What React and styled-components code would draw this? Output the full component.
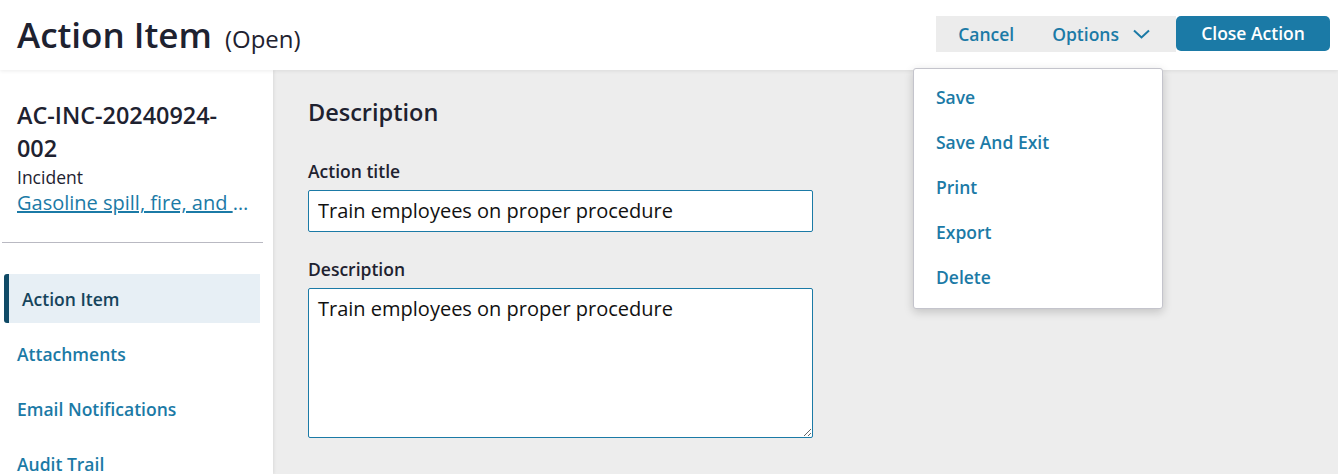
import React from "react";
import styled, { createGlobalStyle } from "styled-components";

const GlobalStyle = createGlobalStyle`
  html, body {
    margin: 0;
    padding: 0;
    height: 100%;
    overflow: hidden;
    font-family: "Open Sans", "Noto Sans", sans-serif;
    background: #ededed;
  }
  * { box-sizing: border-box; }
`;

const BLUE = "#1b7aa6";

const Page = styled.div`
  height: 100vh;
  display: flex;
  flex-direction: column;
`;

const Header = styled.header`
  height: 70px;
  flex: none;
  background: #fff;
  display: flex;
  align-items: center;
  justify-content: space-between;
  padding: 0 8px 0 17px;
  position: relative;
  z-index: 2;
  box-shadow: 0 1px 4px rgba(0, 0, 0, 0.08);
`;

const TitleRow = styled.div`
  display: flex;
  align-items: baseline;
  gap: 13px;
  margin-top: -2px;
`;

const Title = styled.h1`
  margin: 0;
  font-size: 35px;
  font-weight: 600;
  color: #1e2230;
`;

const Status = styled.span`
  font-size: 24px;
  color: #1e2230;
`;

const Actions = styled.div`
  display: flex;
  align-items: stretch;
  height: 36px;
  margin-top: -3px;
  position: relative;
`;

const Toolbar = styled.div`
  display: flex;
  align-items: center;
  gap: 38px;
  background: #ececec;
  padding: 0 26px 0 22px;
`;

const TextButton = styled.button`
  border: none;
  background: none;
  padding: 0;
  font: inherit;
  font-size: 17.5px;
  font-weight: 600;
  color: ${BLUE};
  display: flex;
  align-items: center;
  gap: 14px;
  cursor: pointer;
`;

const PrimaryButton = styled.button`
  border: none;
  background: ${BLUE};
  color: #fff;
  font: inherit;
  font-size: 17.5px;
  font-weight: 600;
  padding: 0;
  border-radius: 5px;
  width: 154px;
  height: 35px;
  cursor: pointer;
`;

const Menu = styled.div`
  position: absolute;
  top: 52px;
  right: 167px;
  width: 250px;
  background: #fff;
  border: 1px solid #c4c4cc;
  border-radius: 3px;
  box-shadow: 0 3px 10px rgba(0, 0, 0, 0.18);
  padding: 6px 0 8px;
  display: flex;
  flex-direction: column;
`;

const MenuItem = styled.div`
  height: 45px;
  display: flex;
  align-items: center;
  padding-left: 22px;
  font-size: 17.5px;
  font-weight: 600;
  color: ${BLUE};
`;

const Body = styled.div`
  flex: 1;
  display: flex;
  min-height: 0;
`;

const Sidebar = styled.aside`
  width: 273px;
  flex: none;
  background: #fff;
  box-shadow: 1px 0 3px rgba(0, 0, 0, 0.08);
  padding-top: 29px;
  z-index: 1;
`;

const Record = styled.div`
  margin: 0 10px 31px 2px;
  padding: 0 12px 25px 15px;
  border-bottom: 1px solid #b9b9c2;
`;

const RecordId = styled.div`
  font-size: 23.4px;
  font-weight: 600;
  line-height: 33px;
  color: #1e2230;
  padding-right: 4px;
`;

const RecordType = styled.div`
  font-size: 17.5px;
  color: #1e2230;
  line-height: 24px;
`;

const RecordLink = styled.a`
  display: block;
  font-size: 20px;
  line-height: 28px;
  color: ${BLUE};
  text-decoration: underline;
  white-space: nowrap;
  overflow: hidden;
  text-overflow: ellipsis;
`;

const Nav = styled.nav`
  display: flex;
  flex-direction: column;
  padding: 0 13px 0 4px;
`;

const NavItem = styled.div`
  height: ${(p) => (p.$active ? "49px" : "55px")};
  margin-bottom: ${(p) => (p.$active ? "3px" : "0")};
  display: flex;
  align-items: center;
  padding-left: 13px;
  font-size: 17.5px;
  font-weight: 600;
  color: ${(p) => (p.$active ? "#15445c" : BLUE)};
  background: ${(p) => (p.$active ? "#e7eff5" : "transparent")};
  border-left: ${(p) => (p.$active ? "5px solid #0f4a66" : "none")};
  border-radius: ${(p) => (p.$active ? "3px 0 0 3px" : "0")};
`;

const Main = styled.main`
  flex: 1;
  padding: 26px 35px;
`;

const SectionTitle = styled.h2`
  margin: 0 0 31px;
  font-size: 23.5px;
  font-weight: 600;
  color: #1e2230;
  line-height: 32px;
`;

const Field = styled.div`
  display: flex;
  flex-direction: column;
  width: 505px;
  margin-bottom: 25px;
`;

const Label = styled.label`
  font-size: 17.5px;
  font-weight: 600;
  color: #1e2230;
  line-height: 24px;
  margin-bottom: 7px;
`;

const TextInput = styled.input`
  height: 42px;
  border: 1px solid ${BLUE};
  border-radius: 2px;
  padding: 0 9px 1px;
  font: inherit;
  font-size: 20px;
  color: #111;
  background: #fff;
  outline: none;
`;

const TextArea = styled.textarea`
  height: 150px;
  border: 1px solid ${BLUE};
  border-radius: 2px;
  padding: 6px 9px;
  font: inherit;
  font-size: 20px;
  line-height: 28px;
  color: #111;
  background: #fff;
  outline: none;
  resize: vertical;
`;

const Chevron = () => (
  <svg width="17" height="10" viewBox="0 0 17 10" fill="none">
    <path d="M1 1.5 L8.5 8.5 L16 1.5" stroke={BLUE} strokeWidth="2" />
  </svg>
);

const menuItems = ["Save", "Save And Exit", "Print", "Export", "Delete"];
const navItems = ["Action Item", "Attachments", "Email Notifications", "Audit Trail"];

export default function App() {
  return (
    <Page>
      <GlobalStyle />
      <Header>
        <TitleRow>
          <Title>Action Item</Title>
          <Status>(Open)</Status>
        </TitleRow>
        <Actions>
          <Toolbar>
            <TextButton>Cancel</TextButton>
            <TextButton>
              Options <Chevron />
            </TextButton>
          </Toolbar>
          <PrimaryButton>Close Action</PrimaryButton>
          <Menu>
            {menuItems.map((m) => (
              <MenuItem key={m}>{m}</MenuItem>
            ))}
          </Menu>
        </Actions>
      </Header>
      <Body>
        <Sidebar>
          <Record>
            <RecordId>AC-INC-20240924-002</RecordId>
            <RecordType>Incident</RecordType>
            <RecordLink href="#">Gasoline spill, fire, and injury at station</RecordLink>
          </Record>
          <Nav>
            {navItems.map((n, i) => (
              <NavItem key={n} $active={i === 0}>
                {n}
              </NavItem>
            ))}
          </Nav>
        </Sidebar>
        <Main>
          <SectionTitle>Description</SectionTitle>
          <Field>
            <Label>Action title</Label>
            <TextInput defaultValue="Train employees on proper procedure" />
          </Field>
          <Field>
            <Label>Description</Label>
            <TextArea defaultValue="Train employees on proper procedure" />
          </Field>
        </Main>
      </Body>
    </Page>
  );
}
